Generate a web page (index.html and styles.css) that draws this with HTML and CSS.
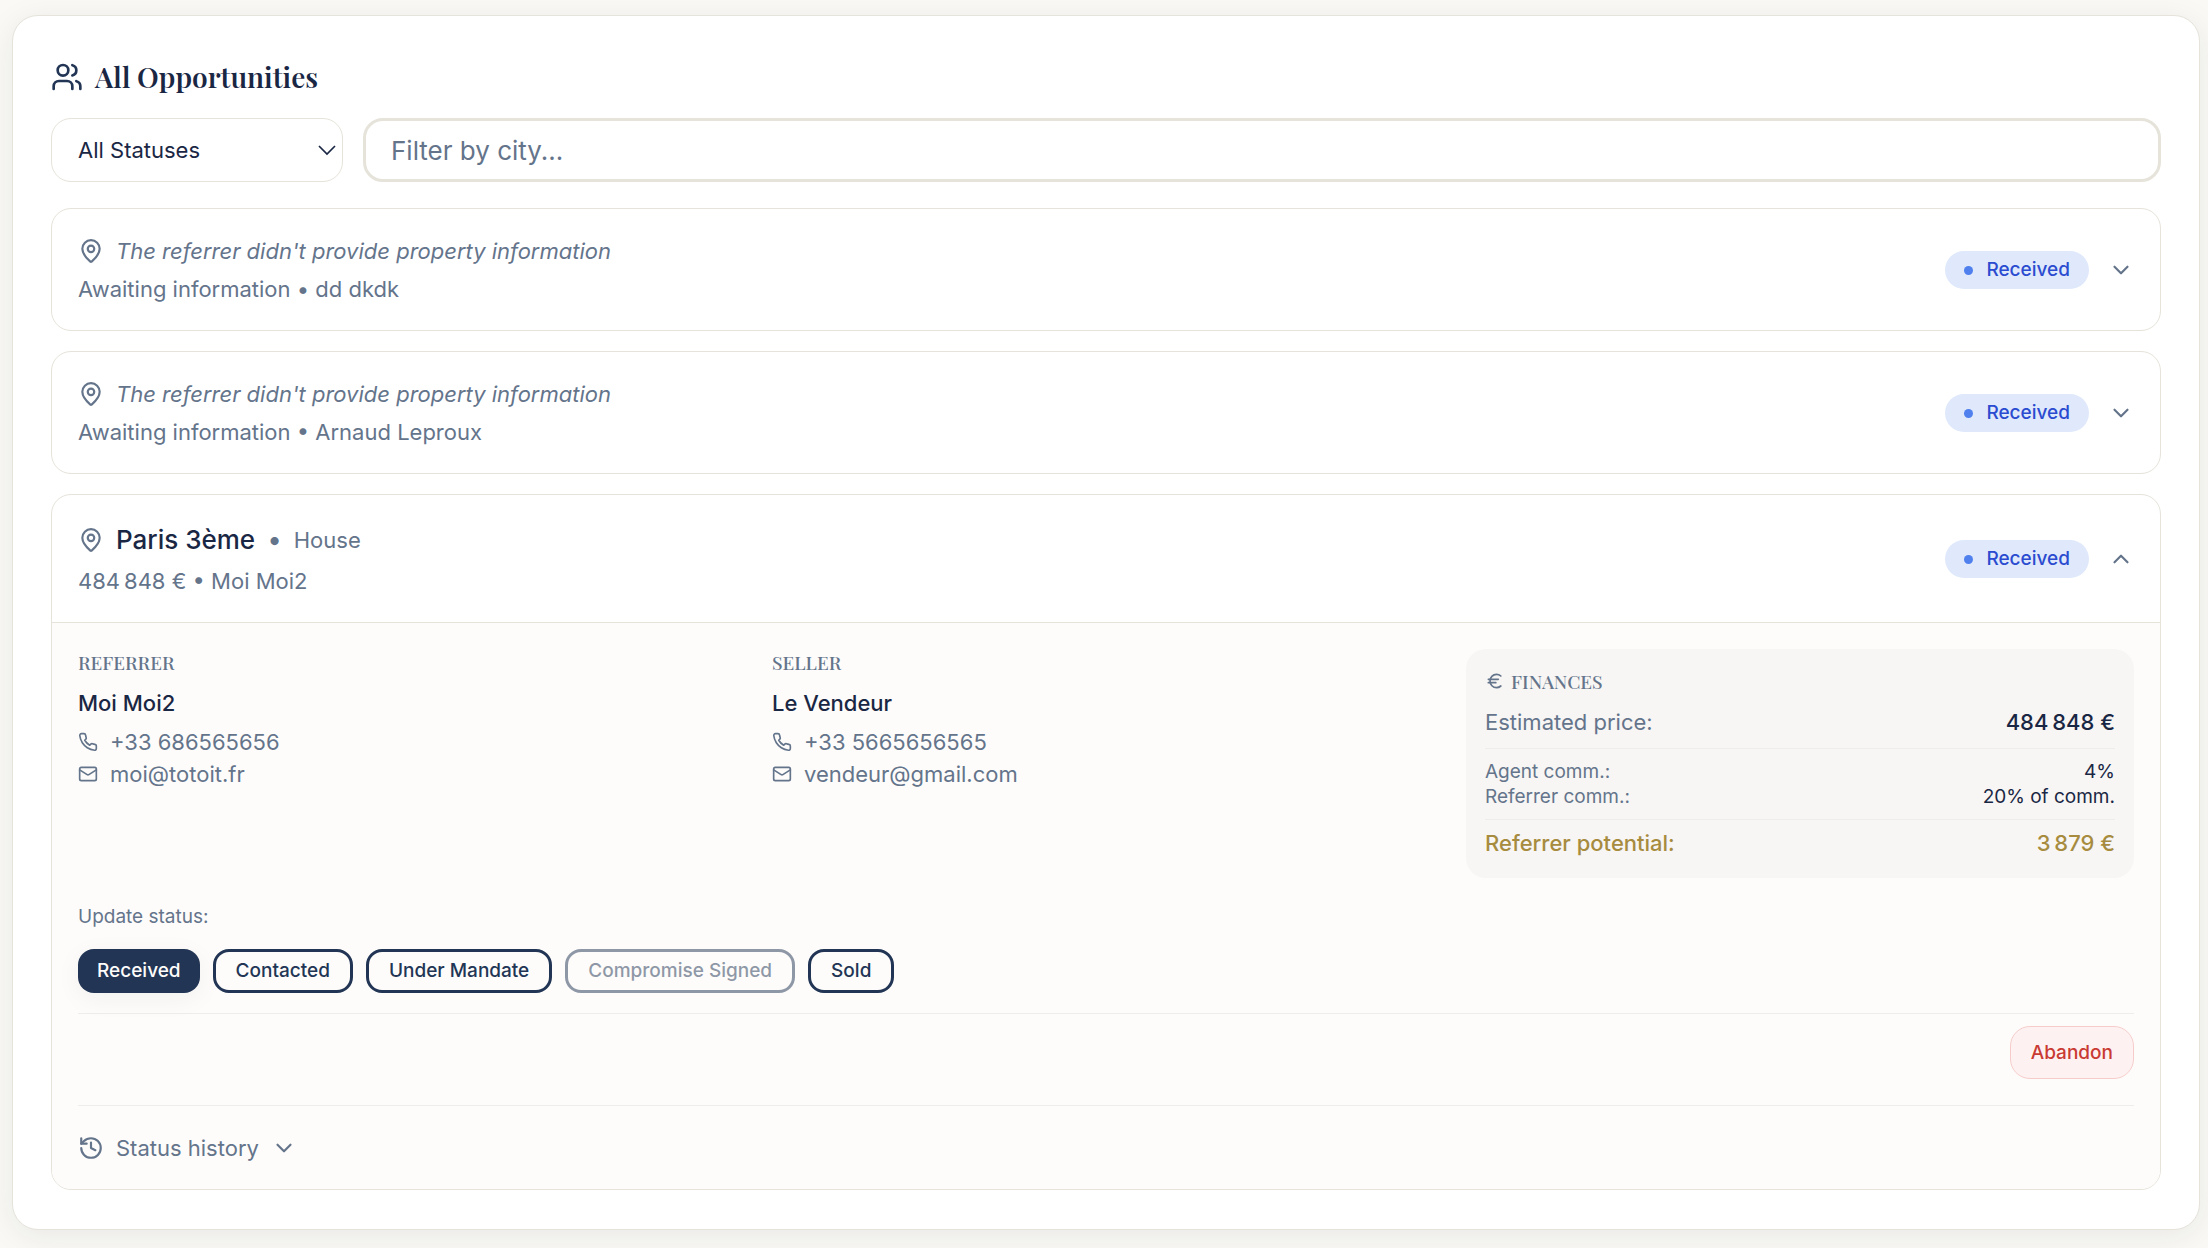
FILE: index.html
```html
<!DOCTYPE html>
<html lang="en">
<head>
<meta charset="utf-8">
<meta name="viewport" content="width=device-width, initial-scale=1">
<title>All Opportunities</title>
<link rel="stylesheet" href="styles.css">
</head>
<body>
<svg class="sprite" aria-hidden="true">
  <symbol id="users" viewBox="0 0 24 24"><path d="M16 21v-2a4 4 0 0 0-4-4H6a4 4 0 0 0-4 4v2"/><circle cx="9" cy="7" r="4"/><path d="M22 21v-2a4 4 0 0 0-3-3.87"/><path d="M16 3.13a4 4 0 0 1 0 7.75"/></symbol>
  <symbol id="pin" viewBox="0 0 24 24"><path d="M20 10c0 4.993-5.539 10.193-7.399 11.799a1 1 0 0 1-1.202 0C9.539 20.193 4 14.993 4 10a8 8 0 0 1 16 0"/><circle cx="12" cy="10" r="3"/></symbol>
  <symbol id="down" viewBox="0 0 24 24"><path d="m6 9 6 6 6-6"/></symbol>
  <symbol id="up" viewBox="0 0 24 24"><path d="m18 15-6-6-6 6"/></symbol>
  <symbol id="phone" viewBox="0 0 24 24"><path d="M22 16.92v3a2 2 0 0 1-2.18 2 19.79 19.79 0 0 1-8.63-3.07 19.5 19.5 0 0 1-6-6 19.79 19.79 0 0 1-3.07-8.67A2 2 0 0 1 4.11 2h3a2 2 0 0 1 2 1.72 12.84 12.84 0 0 0 .7 2.81 2 2 0 0 1-.45 2.11L8.09 9.91a16 16 0 0 0 6 6l1.27-1.27a2 2 0 0 1 2.11-.45 12.84 12.84 0 0 0 2.81.7A2 2 0 0 1 22 16.92z"/></symbol>
  <symbol id="mail" viewBox="0 0 24 24"><rect width="20" height="16" x="2" y="4" rx="2"/><path d="m22 7-8.97 5.7a1.94 1.94 0 0 1-2.06 0L2 7"/></symbol>
  <symbol id="euro" viewBox="0 0 24 24"><path d="M4 10h12"/><path d="M4 14h9"/><path d="M19 6a7.7 7.7 0 0 0-5.2-2A7.9 7.9 0 0 0 6 12c0 4.4 3.5 8 7.8 8 2 0 3.8-.8 5.2-2"/></symbol>
  <symbol id="history" viewBox="0 0 24 24"><path d="M3 12a9 9 0 1 0 9-9 9.75 9.75 0 0 0-6.74 2.74L3 8"/><path d="M3 3v5h5"/><path d="M12 7v5l4 2"/></symbol>
</svg>
<main class="panel">
  <h1 class="panel-title"><svg class="icon icon-lg" aria-hidden="true"><use href="#users"/></svg>All Opportunities</h1>

  <form class="filters">
    <div class="select-wrap">
      <select class="status-select" aria-label="Status"><option>All Statuses</option></select>
      <svg class="select-arrow" viewBox="0 0 18 12" stroke-width="1.7" aria-hidden="true"><path d="m1 2 8 8 8-8"/></svg>
    </div>
    <input class="city-input" type="text" placeholder="Filter by city..." aria-label="City">
  </form>

  <ul class="list">
    <li class="card">
      <div class="card-head">
        <div class="summary">
          <div class="place-line"><svg class="icon" aria-hidden="true"><use href="#pin"/></svg><em>The referrer didn't provide property information</em></div>
          <div>Awaiting information • dd dkdk</div>
        </div>
        <span class="badge">Received</span>
        <button class="toggle" type="button" aria-label="Expand"><svg class="icon" aria-hidden="true"><use href="#down"/></svg></button>
      </div>
    </li>

    <li class="card">
      <div class="card-head">
        <div class="summary">
          <div class="place-line"><svg class="icon" aria-hidden="true"><use href="#pin"/></svg><em>The referrer didn't provide property information</em></div>
          <div>Awaiting information • Arnaud Leproux</div>
        </div>
        <span class="badge">Received</span>
        <button class="toggle" type="button" aria-label="Expand"><svg class="icon" aria-hidden="true"><use href="#down"/></svg></button>
      </div>
    </li>

    <li class="card">
      <div class="card-head">
        <div class="summary">
          <div class="place-line place-line-lg"><svg class="icon" aria-hidden="true"><use href="#pin"/></svg><h2 class="city">Paris 3ème</h2><span class="separator">•</span><span>House</span></div>
          <div>484&#8239;848 € • Moi Moi2</div>
        </div>
        <span class="badge">Received</span>
        <button class="toggle" type="button" aria-label="Collapse" aria-expanded="true"><svg class="icon" aria-hidden="true"><use href="#up"/></svg></button>
      </div>

      <div class="detail">
        <div class="columns">
          <section>
            <h3 class="label">REFERRER</h3>
            <p class="person">Moi Moi2</p>
            <a class="contact" href="tel:+33686565656"><svg class="icon icon-sm" aria-hidden="true"><use href="#phone"/></svg>+33 686565656</a>
            <a class="contact" href="mailto:moi@totoit.fr"><svg class="icon icon-sm" aria-hidden="true"><use href="#mail"/></svg>moi@totoit.fr</a>
          </section>
          <section>
            <h3 class="label">SELLER</h3>
            <p class="person">Le Vendeur</p>
            <a class="contact" href="tel:+335665656565"><svg class="icon icon-sm" aria-hidden="true"><use href="#phone"/></svg>+33 5665656565</a>
            <a class="contact" href="mailto:vendeur@gmail.com"><svg class="icon icon-sm" aria-hidden="true"><use href="#mail"/></svg>vendeur@gmail.com</a>
          </section>
          <section class="finances">
            <h3 class="label"><svg class="icon icon-sm" aria-hidden="true"><use href="#euro"/></svg>FINANCES</h3>
            <dl class="amounts">
              <div class="amount"><dt>Estimated price:</dt><dd class="price">484&#8239;848 €</dd></div>
              <div class="rates">
                <div class="amount"><dt>Agent comm.:</dt><dd>4%</dd></div>
                <div class="amount"><dt>Referrer comm.:</dt><dd>20% of comm.</dd></div>
              </div>
              <div class="amount potential"><dt>Referrer potential:</dt><dd>3&#8239;879 €</dd></div>
            </dl>
          </section>
        </div>

        <div class="update">
          <p class="update-label" id="update-label">Update status:</p>
          <div class="statuses" role="group" aria-labelledby="update-label">
            <button class="status current" type="button">Received</button>
            <button class="status" type="button">Contacted</button>
            <button class="status" type="button">Under Mandate</button>
            <button class="status" type="button" disabled>Compromise Signed</button>
            <button class="status" type="button">Sold</button>
          </div>
        </div>

        <div class="abandon-row"><button class="abandon" type="button">Abandon</button></div>

        <div class="history-row"><button class="history" type="button"><svg class="icon" aria-hidden="true"><use href="#history"/></svg>Status history<svg class="icon" aria-hidden="true"><use href="#down"/></svg></button></div>
      </div>
    </li>
  </ul>
</main>
</body>
</html>
```
FILE: styles.css
```css
:root {
  --navy: #1a2744;
  --navy-soft: #223555;
  --slate: #64748b;
  --line: #e5e3da;
  --line-soft: #eeedeb;
}

*, *::before, *::after { box-sizing: border-box; }

body {
  margin: 0;
  padding: 15px 8px 18px 12px;
  background: #faf9f5;
  color: var(--slate);
  font: 22px/32px Inter, "Liberation Sans", sans-serif;
}

h1, h2, h3, p, ul, dl, dd { margin: 0; padding: 0; }
button, input, select { font: inherit; color: inherit; }
button { cursor: pointer; }

.sprite { display: none; }

.icon {
  flex: none;
  width: 26px;
  height: 26px;
  fill: none;
  stroke: currentColor;
  stroke-width: 2;
  stroke-linecap: round;
  stroke-linejoin: round;
}
.icon-sm { width: 20px; height: 20px; }
.icon-lg { width: 32px; height: 32px; color: var(--navy-soft); }

.panel {
  padding: 38px 38px 39px;
  background: #fff;
  border: 1px solid var(--line);
  border-radius: 26px;
  box-shadow: 0 6px 32px rgba(26, 39, 68, 0.08);
}

.panel-title {
  display: flex;
  align-items: center;
  gap: 12px;
  margin-bottom: 18px;
  color: var(--navy);
  font: 600 28px/46px "Playfair Display", "Liberation Serif", serif;
}

.filters { display: flex; gap: 20px; margin-bottom: 26px; }

.select-wrap { display: grid; flex: none; width: 292px; }
.select-wrap > * { grid-area: 1 / 1; }
.select-arrow {
  align-self: center;
  justify-self: end;
  width: 18px;
  height: 12px;
  margin-right: 7px;
  fill: none;
  stroke: var(--navy);
  pointer-events: none;
}

.status-select, .city-input {
  height: 64px;
  background: #fff;
  border-radius: 20px;
  outline: none;
}
.status-select {
  appearance: none;
  width: 100%;
  padding: 0 26px;
  border: 1px solid var(--line);
  color: var(--navy);
}
.city-input {
  flex: 1;
  min-width: 0;
  padding: 0 25px;
  border: 3px solid var(--line);
  color: var(--navy);
  font-size: 26px;
}
.city-input::placeholder { color: var(--slate); opacity: 1; }

.list { display: grid; gap: 20px; list-style: none; }

.card {
  overflow: hidden;
  background: #fff;
  border: 1px solid var(--line);
  border-radius: 20px;
}
.card-head { display: flex; align-items: center; padding: 26px 26px 25px; }
.summary { display: grid; flex: 1; gap: 6px; min-width: 0; }
.place-line { display: flex; align-items: center; gap: 12px; }
.place-line-lg { line-height: 38px; }
.city { color: var(--navy); font-size: 26px; font-weight: 500; }
.separator { font-size: 26px; }

.badge {
  display: flex;
  align-items: center;
  gap: 13px;
  padding: 3px 19px;
  border-radius: 19px;
  background: #dfe9fb;
  color: #2b4bd0;
  font-size: 19px;
  font-weight: 500;
}
.badge::before {
  content: "";
  width: 9px;
  height: 9px;
  border-radius: 50%;
  background: #4f80ee;
}

.toggle {
  display: flex;
  margin-left: 19px;
  padding: 0;
  background: none;
  border: 0;
}

.detail {
  padding: 26px 26px 25px;
  background: #fdfcfa;
  border-top: 1px solid var(--line);
}
.columns { display: grid; grid-template-columns: repeat(3, 1fr); gap: 26px; }

.label {
  display: flex;
  align-items: center;
  gap: 6px;
  margin-bottom: 12px;
  font: 500 19px/26px "Playfair Display", "Liberation Serif", serif;
}
.person { margin-bottom: 7px; color: var(--navy); font-weight: 500; }
.contact {
  display: flex;
  align-items: center;
  gap: 12px;
  color: inherit;
  text-decoration: none;
}

.finances { padding: 19px; background: #f7f6f4; border-radius: 20px; }
.amount { display: flex; justify-content: space-between; }
.price { color: var(--navy); font-weight: 500; }
.rates {
  margin: 10px 0 7px;
  padding: 10px 0;
  border: solid var(--line-soft);
  border-width: 1px 0;
  font-size: 19px;
  line-height: 25px;
}
.rates dd { color: var(--navy); }
.potential { color: #a78b3f; font-weight: 500; }

.update { margin: 26px 0 20px; }
.update-label { margin-bottom: 19px; font-size: 19px; line-height: 26px; }
.statuses { display: flex; flex-wrap: wrap; gap: 13px; }

.status {
  height: 44px;
  padding: 0 20px;
  background: transparent;
  border: 3px solid var(--navy-soft);
  border-radius: 16px;
  color: var(--navy-soft);
  font-size: 19px;
  font-weight: 500;
  line-height: 26px;
}
.status.current {
  padding: 0 19px;
  border-width: 0;
  background: var(--navy-soft);
  color: #fdfcfa;
  box-shadow: 0 6px 26px rgba(26, 39, 68, 0.05);
}
.status:disabled { opacity: 0.5; cursor: default; }

.abandon-row {
  display: flex;
  justify-content: flex-end;
  padding: 12px 0 26px;
  border-top: 1px solid var(--line-soft);
}
.abandon {
  height: 53px;
  padding: 0 20px;
  background: #fdf2f1;
  border: 1px solid #f6cccb;
  border-radius: 20px;
  color: #c93a33;
  font-size: 19px;
  font-weight: 500;
}

.history-row { padding-top: 26px; border-top: 1px solid var(--line-soft); }
.history {
  display: flex;
  align-items: center;
  gap: 12px;
  padding: 0;
  background: none;
  border: 0;
}
```
